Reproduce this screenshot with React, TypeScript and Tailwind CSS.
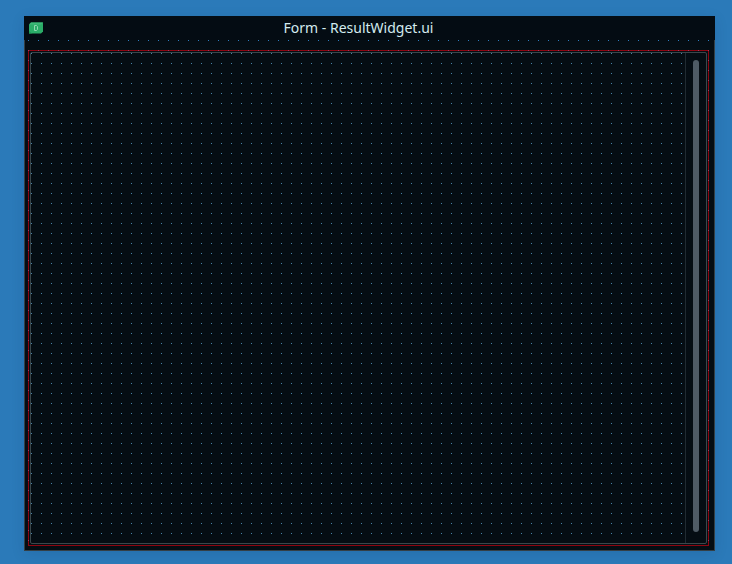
type DotsProps = { id: string; color: string; className: string };

// One-pixel grid points, ten pixels apart, starting at the layer's top left.
function Dots({ id, color, className }: DotsProps) {
  return (
    <svg className={className} shapeRendering="crispEdges" aria-hidden="true">
      <pattern id={id} width="10" height="10" patternUnits="userSpaceOnUse">
        <rect width="1" height="1" fill={color} />
      </pattern>
      <rect width="100%" height="100%" fill={`url(#${id})`} />
    </svg>
  );
}

function FormIcon() {
  return (
    <svg width="14" height="12" viewBox="0 0 14 12" aria-hidden="true">
      <path d="M2 0.5H14V9.5L12 11.5H0V2.5Z" fill="#2bad68" />
      <path d="M2 0.5H14L12 2.5H0Z" fill="#3dba78" />
      <path d="M0 9L3 11.5H0Z" fill="#1b9a57" />
      <path d="M5.5 3.5H7.5L8.5 4.5V7.5L7.5 8.5H5.5Z" fill="none" stroke="#8fd8b0" />
    </svg>
  );
}

export default function App() {
  return (
    <main className="h-[564px] w-[732px] bg-[#2b7ab9] pt-4 pl-6">
      <section className="flex h-[535px] w-[691px] flex-col rounded-t-[1px] bg-[#050d13] shadow-[0_3px_14px_rgba(0,30,70,0.12)]">
        <header className="flex h-6 items-center bg-[#040c13] pr-[41px] pl-[5px]">
          <FormIcon />
          <h1 className="flex-1 text-center font-['Noto_Sans',sans-serif] text-[14px] leading-6 font-normal text-[#d3eaee]">
            Form - ResultWidget.ui
          </h1>
        </header>
        <div className="relative flex-1 border-x border-b border-[#343f45] pt-[10px] pr-[5px] pb-1 pl-[3px]">
          <div className="h-full border border-[#8d0510] p-px">
            <div className="relative z-10 flex h-full rounded-[2px] border border-[#3b474b] bg-[#050d13]">
              <div className="relative flex-1 border-r border-[#202b32]">
                <Dots id="editor-grid" color="#4584ab" className="absolute top-0 left-0 h-full w-full" />
              </div>
              <div className="flex w-5 justify-center pt-[7px] pb-[11px]">
                <div className="h-full w-1.5 rounded-full bg-[#4f5b65]" />
              </div>
            </div>
          </div>
          <Dots id="form-grid" color="#2e7ec0" className="absolute top-0 left-[3px] h-[10px] w-[681px]" />
          <Dots id="frame-grid" color="#9b3c68" className="absolute top-[10px] left-[3px] h-[496px] w-[681px]" />
        </div>
      </section>
    </main>
  );
}
